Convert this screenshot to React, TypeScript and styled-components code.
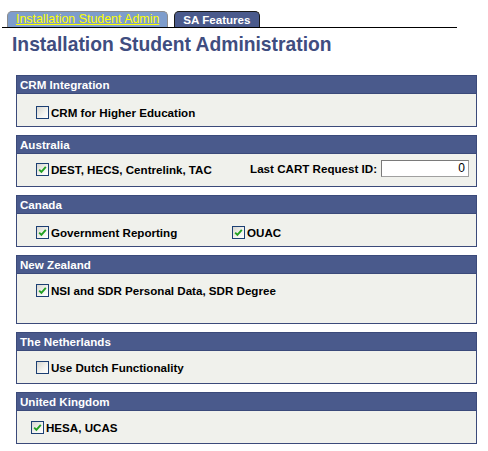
import styled, { createGlobalStyle } from 'styled-components';

const GlobalStyle = createGlobalStyle`
  body {
    margin: 0;
    background: #ffffff;
    font-family: Arial, "Liberation Sans", sans-serif;
  }
`;

const Page = styled.div`
  width: 488px;
  height: 451px;
  overflow: hidden;
`;

const TabBar = styled.div`
  display: flex;
  align-items: flex-end;
  gap: 6px;
  margin: 10px 31px 0 2px;
  padding-left: 5px;
  border-bottom: 1px solid #000000;
  height: 17px;
`;

const Tab = styled.div<{ active?: boolean }>`
  height: 16px;
  box-sizing: border-box;
  padding: 0 ${(p) => (p.active ? '8px' : '8px')};
  border: 1px solid ${(p) => (p.active ? '#1a1a1a' : '#8c8c8c')};
  border-bottom: none;
  border-radius: 5px 5px 0 0;
  background: ${(p) => (p.active ? '#4a5a8c' : '#7e9dcc')};
  color: ${(p) => (p.active ? '#ffffff' : '#ffff00')};
  font-size: ${(p) => (p.active ? '11.6px' : '12.4px')};
  font-weight: ${(p) => (p.active ? 'bold' : 'normal')};
  text-decoration: ${(p) => (p.active ? 'none' : 'underline')};
  line-height: 15px;
  white-space: nowrap;
`;

const Title = styled.h1`
  margin: 6px 0 0 12px;
  font-size: 19.3px;
  line-height: 22px;
  font-weight: bold;
  color: #3f4d80;
`;

const Panels = styled.div`
  display: flex;
  flex-direction: column;
  gap: 8px;
  margin: 19px 0 0 16px;
  width: 461px;
`;

const Panel = styled.section`
  border: 1px solid #3b4a7a;
  background: #f0f1ec;
`;

const PanelHeader = styled.div`
  height: 17px;
  line-height: 17px;
  background: #4a5a8c;
  color: #ffffff;
  font-size: 11.6px;
  font-weight: bold;
  padding-left: 3px;
  border-bottom: 1px solid #3b4a7a;
`;

const PanelBody = styled.div<{ tall?: boolean; padTop?: number }>`
  box-sizing: border-box;
  height: ${(p) => (p.tall ? '49px' : '32px')};
  padding-top: ${(p) => p.padTop ?? 8}px;
  display: flex;
  align-items: flex-start;
`;

const Field = styled.label<{ indent?: number; width?: number }>`
  display: flex;
  align-items: center;
  gap: 2px;
  margin-left: ${(p) => p.indent ?? 19}px;
  width: ${(p) => (p.width ? `${p.width}px` : 'auto')};
  height: 17px;
  font-size: 11.6px;
  font-weight: bold;
  color: #000000;
  white-space: nowrap;
`;

const Box = styled.span`
  display: inline-flex;
  align-items: center;
  justify-content: center;
  width: 13px;
  height: 13px;
  box-sizing: border-box;
  border: 1px solid #1c3f73;
  background: linear-gradient(135deg, #d6d6d0 0%, #f4f4f0 60%, #ffffff 100%);
`;

const RightGroup = styled.div`
  display: flex;
  align-items: center;
  gap: 4px;
  margin-left: auto;
  margin-right: 7px;
  font-size: 11.6px;
  font-weight: bold;
  margin-top: -1px;
`;

const NumberInput = styled.div`
  width: 88px;
  height: 17px;
  box-sizing: border-box;
  border: 1px solid #a0a0a0;
  border-top-color: #7a7a7a;
  border-left-color: #7a7a7a;
  background: #ffffff;
  font-size: 12px;
  font-weight: normal;
  line-height: 15px;
  text-align: right;
  padding-right: 3px;
`;

function Check({ checked }: { checked?: boolean }) {
  return (
    <Box>
      {checked && (
        <svg width="9" height="9" viewBox="0 0 9 9">
          <path d="M1.2 4.6 L3.4 6.8 L7.8 1.8" fill="none" stroke="#22a022" strokeWidth="1.9" />
        </svg>
      )}
    </Box>
  );
}

function CheckField({
  label,
  checked,
  indent,
  width,
}: {
  label: string;
  checked?: boolean;
  indent?: number;
  width?: number;
}) {
  return (
    <Field indent={indent} width={width}>
      <Check checked={checked} />
      {label}
    </Field>
  );
}

export default function App() {
  return (
    <Page>
      <GlobalStyle />
      <TabBar>
        <Tab>Installation Student Admin</Tab>
        <Tab active>SA Features</Tab>
      </TabBar>
      <Title>Installation Student Administration</Title>
      <Panels>
        <Panel>
          <PanelHeader>CRM Integration</PanelHeader>
          <PanelBody padTop={10}>
            <CheckField label="CRM for Higher Education" />
          </PanelBody>
        </Panel>
        <Panel>
          <PanelHeader>Australia</PanelHeader>
          <PanelBody padTop={7}>
            <CheckField label="DEST, HECS, Centrelink, TAC" checked />
            <RightGroup>
              Last CART Request ID:
              <NumberInput>0</NumberInput>
            </RightGroup>
          </PanelBody>
        </Panel>
        <Panel>
          <PanelHeader>Canada</PanelHeader>
          <PanelBody padTop={10}>
            <CheckField label="Government Reporting" checked width={196} />
            <CheckField label="OUAC" checked indent={0} />
          </PanelBody>
        </Panel>
        <Panel>
          <PanelHeader>New Zealand</PanelHeader>
          <PanelBody tall>
            <CheckField label="NSI and SDR Personal Data, SDR Degree" checked />
          </PanelBody>
        </Panel>
        <Panel>
          <PanelHeader>The Netherlands</PanelHeader>
          <PanelBody>
            <CheckField label="Use Dutch Functionality" />
          </PanelBody>
        </Panel>
        <Panel>
          <PanelHeader>United Kingdom</PanelHeader>
          <PanelBody>
            <CheckField label="HESA, UCAS" checked indent={14} />
          </PanelBody>
        </Panel>
      </Panels>
    </Page>
  );
}
